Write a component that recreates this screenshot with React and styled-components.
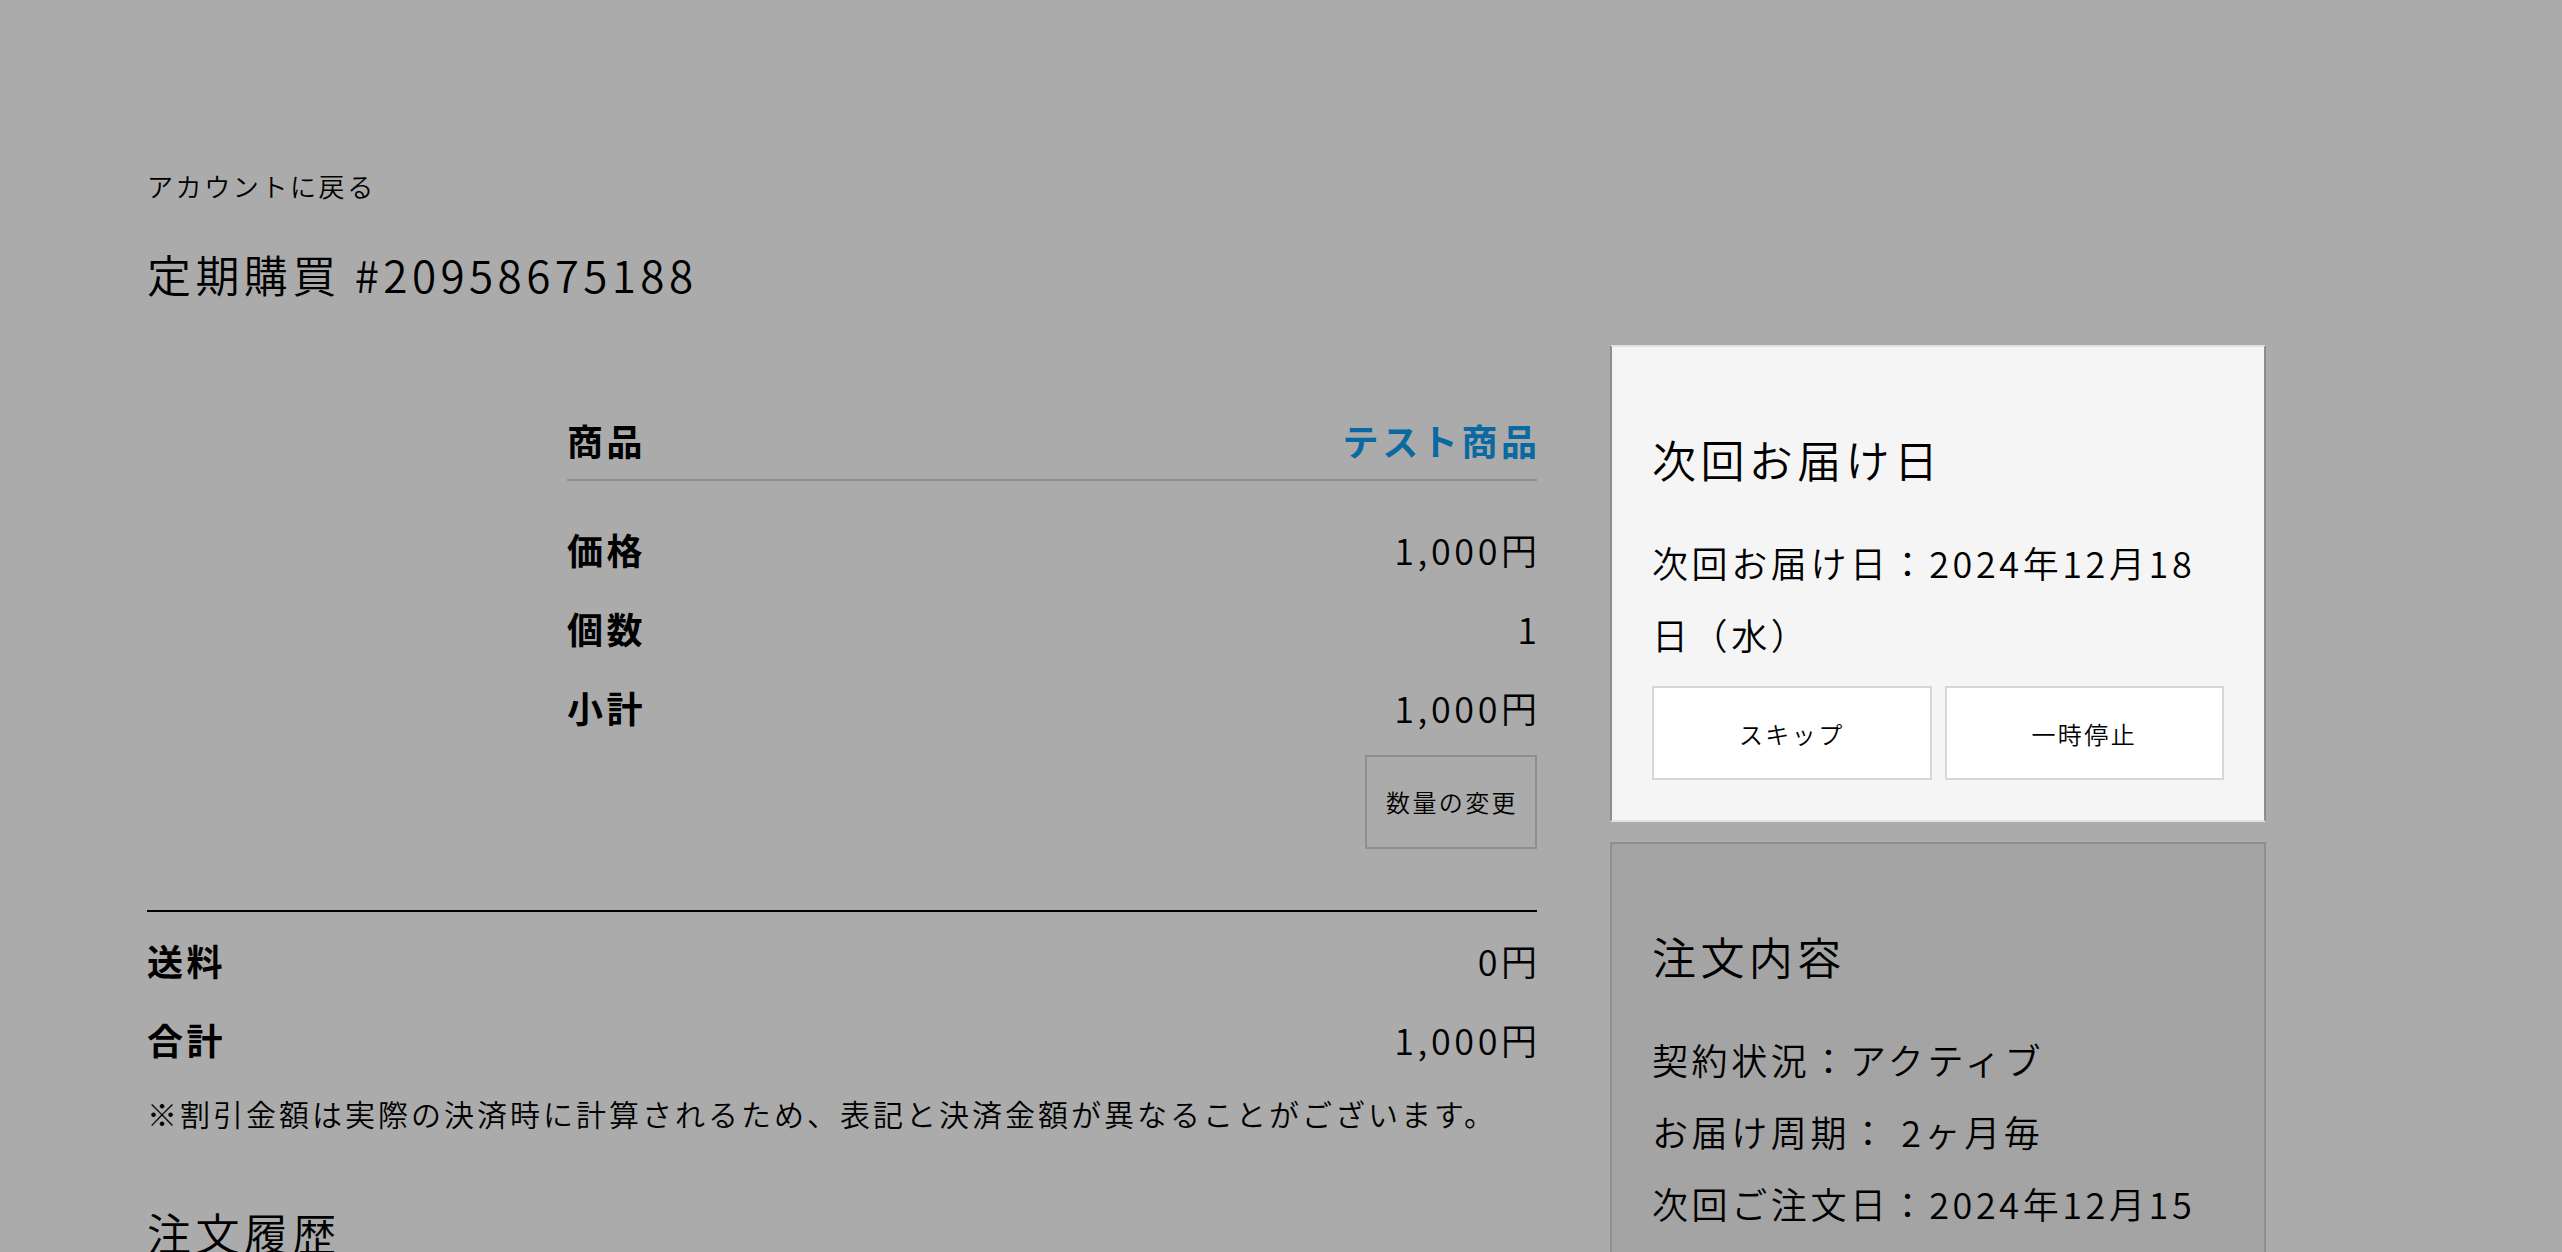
import React from 'react'
import styled, { createGlobalStyle } from 'styled-components'

const GlobalStyle = createGlobalStyle`
  * { box-sizing: border-box; }
  body {
    margin: 0;
    background: #ababab;
    color: #000;
    font-family: "Noto Sans CJK JP", "Noto Sans", sans-serif;
    font-weight: 350;
  }
`

const Page = styled.div`
  padding: 166px 0 0 147px;
  width: 2266px;
`
const BackLink = styled.a`
  display: block;
  font-size: 26px;
  line-height: 39px;
  letter-spacing: .1em;
  color: #000;
  text-decoration: none;
`
const Title = styled.h1`
  margin: 36px 0 0;
  font-size: 44px;
  line-height: 66px;
  letter-spacing: .1em;
  font-weight: 350;
`
const Main = styled.div`
  display: flex;
  gap: 73px;
  margin-top: 38px;
  align-items: flex-start;
`
const LeftCol = styled.div`
  width: 1390px;
  flex-shrink: 0;
`
const Product = styled.div`
  display: grid;
  grid-template-columns: 400px 1fr;
  gap: 20px;
  padding-top: 68px;
`
const Thumb = styled.div``
const Details = styled.div`
  display: flex;
  flex-direction: column;
`
const Row = styled.div`
  display: flex;
  justify-content: space-between;
  font-size: 36px;
  line-height: 54px;
  letter-spacing: .1em;
  & + & { margin-top: 25px; }
`
const HeadRow = styled(Row)`
  padding-bottom: 12px;
  border-bottom: 2px solid #8f8f8f;
  margin-bottom: 16px;
`
const Label = styled.span`
  font-weight: 700;
`
const Value = styled.span`
  color: ${p => (p.$link ? '#0a69a0' : '#000')};
  font-weight: ${p => (p.$link ? 700 : 350)};
  margin-right: -.1em;
`
const Actions = styled.div`
  display: flex;
  justify-content: flex-end;
  margin-top: 21px;
`
const OutlineButton = styled.button`
  font: inherit;
  font-size: 24px;
  line-height: 36px;
  letter-spacing: .1em;
  padding: 27px 17px 27px 19px;
  background: transparent;
  border: 2px solid #8f8f8f;
  color: #000;
`
const Divider = styled.hr`
  margin: 61px 0 21px;
  border: 0;
  border-top: 2px solid #000;
`
const Note = styled.p`
  margin: 25px 0 0;
  font-size: 30px;
  line-height: 45px;
  letter-spacing: .1em;
`
const SectionTitle = styled.h2`
  margin: 63px 0 0;
  font-size: 44px;
  line-height: 66px;
  letter-spacing: .1em;
  font-weight: 350;
`
const RightCol = styled.div`
  width: 656px;
  flex-shrink: 0;
  display: flex;
  flex-direction: column;
  gap: 20px;
`
const Card = styled.div`
  padding: 40px;
  background: ${p => (p.$active ? '#f5f5f5' : '#a4a4a4')};
  border: 2px solid ${p => (p.$active ? '#e2e2e2' : '#8f8f8f')};
  border-left-color: ${p => (p.$active ? '#8c8c8c' : '#8f8f8f')};
  border-right-color: ${p => (p.$active ? '#8c8c8c' : '#8f8f8f')};
`
const CardTitle = styled.h3`
  margin: 39px 0 34px;
  font-size: 44px;
  line-height: 66px;
  letter-spacing: .1em;
  font-weight: 350;
`
const CardText = styled.p`
  margin: 0;
  font-size: 36px;
  line-height: 72px;
  letter-spacing: .1em;
`
const ButtonGrid = styled.div`
  display: grid;
  grid-template-columns: 1fr 1fr;
  gap: 13px;
  margin-top: 16px;
`
const WhiteButton = styled.button`
  font: inherit;
  font-size: 24px;
  letter-spacing: .1em;
  height: 94px;
  background: #fff;
  border: 2px solid #d6d6d6;
  color: #000;
`

export default function App() {
  return (
    <>
      <GlobalStyle />
      <Page>
        <BackLink href="#">アカウントに戻る</BackLink>
        <Title>定期購買 #20958675188</Title>
        <Main>
          <LeftCol>
            <Product>
              <Thumb />
              <Details>
                <HeadRow>
                  <Label>商品</Label>
                  <Value $link>テスト商品</Value>
                </HeadRow>
                <Row><Label>価格</Label><Value>1,000円</Value></Row>
                <Row><Label>個数</Label><Value>1</Value></Row>
                <Row><Label>小計</Label><Value>1,000円</Value></Row>
                <Actions>
                  <OutlineButton>数量の変更</OutlineButton>
                </Actions>
              </Details>
            </Product>
            <Divider />
            <Row><Label>送料</Label><Value>0円</Value></Row>
            <Row><Label>合計</Label><Value>1,000円</Value></Row>
            <Note>※割引金額は実際の決済時に計算されるため、表記と決済金額が異なることがございます。</Note>
            <SectionTitle>注文履歴</SectionTitle>
          </LeftCol>
          <RightCol>
            <Card $active>
              <CardTitle>次回お届け日</CardTitle>
              <CardText>次回お届け日：2024年12月18日（水）</CardText>
              <ButtonGrid>
                <WhiteButton>スキップ</WhiteButton>
                <WhiteButton>一時停止</WhiteButton>
              </ButtonGrid>
            </Card>
            <Card>
              <CardTitle>注文内容</CardTitle>
              <CardText>契約状況：アクティブ</CardText>
              <CardText>お届け周期： 2ヶ月毎</CardText>
              <CardText>次回ご注文日：2024年12月15日（水）</CardText>
            </Card>
          </RightCol>
        </Main>
      </Page>
    </>
  )
}
